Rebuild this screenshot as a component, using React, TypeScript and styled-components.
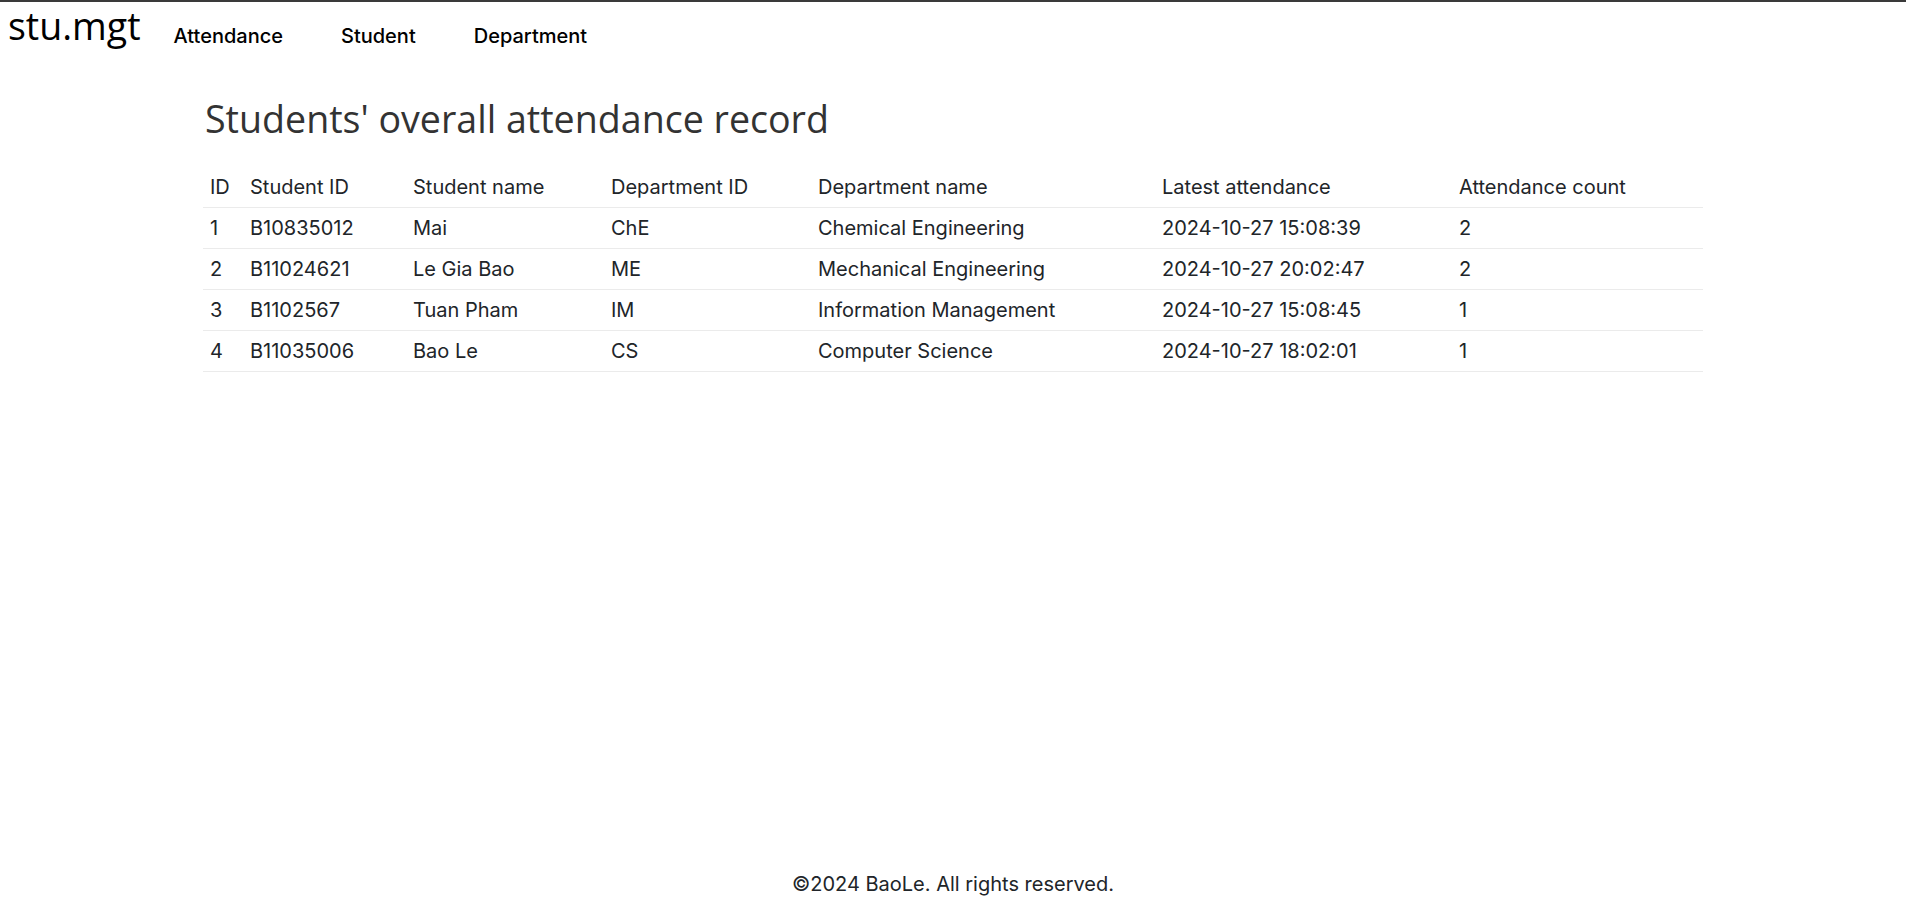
import React from "react";
import styled, { createGlobalStyle } from "styled-components";

const GlobalStyle = createGlobalStyle`
  html, body {
    margin: 0;
    padding: 0;
    background: #fff;
  }
  body {
    border-top: 2px solid #3a3a3a;
    font-family: Inter, "Liberation Sans", sans-serif;
    color: #212529;
  }
`;

const Page = styled.div`
  min-height: calc(100vh - 2px);
  display: flex;
  flex-direction: column;
`;

const Navbar = styled.nav`
  display: flex;
  align-items: flex-start;
  padding: 0 8px;
  height: 54px;
`;

const Logo = styled.a`
  font-family: "Open Sans", "Noto Sans", sans-serif;
  font-size: 37.5px;
  line-height: 44px;
  margin-top: 2px;
  color: #000;
  text-decoration: none;
  margin-right: 33px;
`;

const NavLinks = styled.ul`
  display: flex;
  gap: 58px;
  list-style: none;
  margin: 0;
  padding: 22px 0 0;
`;

const NavLink = styled.a`
  font-family: Inter, sans-serif;
  font-size: 20px;
  line-height: 24px;
  font-weight: 500;
  color: #000;
  text-decoration: none;
`;

const Main = styled.main`
  flex: 1;
  width: 1500px;
  margin: 0 auto;
`;

const Title = styled.h1`
  font-family: "Open Sans", "Noto Sans", sans-serif;
  font-weight: 400;
  font-size: 37.6px;
  line-height: 52px;
  color: #333;
  margin: 37px 0 22px 2px;
`;

const Table = styled.table`
  width: 100%;
  table-layout: fixed;
  border-collapse: collapse;
  font-size: 20px;
  color: #212529;
`;

const Cell = styled.td`
  padding: 8px 8px 8px 7px;
  line-height: 24px;
  text-align: left;
  font-weight: 400;
  white-space: nowrap;
  border-bottom: 1px solid #ebebeb;
`;

const HeadCell = styled(Cell).attrs({ as: "th" })``;

const Footer = styled.footer`
  text-align: center;
  font-size: 20px;
  line-height: 26px;
  padding: 16px 0;
  color: #212529;
`;

const columns = [
  { label: "ID", width: 40 },
  { label: "Student ID", width: 163 },
  { label: "Student name", width: 198 },
  { label: "Department ID", width: 207 },
  { label: "Department name", width: 344 },
  { label: "Latest attendance", width: 297 },
  { label: "Attendance count", width: 251 },
];

const records = [
  [1, "B10835012", "Mai", "ChE", "Chemical Engineering", "2024-10-27 15:08:39", 2],
  [2, "B11024621", "Le Gia Bao", "ME", "Mechanical Engineering", "2024-10-27 20:02:47", 2],
  [3, "B1102567", "Tuan Pham", "IM", "Information Management", "2024-10-27 15:08:45", 1],
  [4, "B11035006", "Bao Le", "CS", "Computer Science", "2024-10-27 18:02:01", 1],
];

const App = () => {
  return (
    <Page>
      <GlobalStyle />
      <Navbar>
        <Logo href="#">stu.mgt</Logo>
        <NavLinks>
          <li><NavLink href="#">Attendance</NavLink></li>
          <li><NavLink href="#">Student</NavLink></li>
          <li><NavLink href="#">Department</NavLink></li>
        </NavLinks>
      </Navbar>
      <Main>
        <Title>Students' overall attendance record</Title>
        <Table>
          <colgroup>
            {columns.map((c) => (
              <col key={c.label} style={{ width: c.width }} />
            ))}
          </colgroup>
          <thead>
            <tr>
              {columns.map((c) => (
                <HeadCell key={c.label}>{c.label}</HeadCell>
              ))}
            </tr>
          </thead>
          <tbody>
            {records.map((row) => (
              <tr key={row[0]}>
                {row.map((v, i) => (
                  <Cell key={i}>{v}</Cell>
                ))}
              </tr>
            ))}
          </tbody>
        </Table>
      </Main>
      <Footer>©2024 BaoLe. All rights reserved.</Footer>
    </Page>
  );
};

export default App;
